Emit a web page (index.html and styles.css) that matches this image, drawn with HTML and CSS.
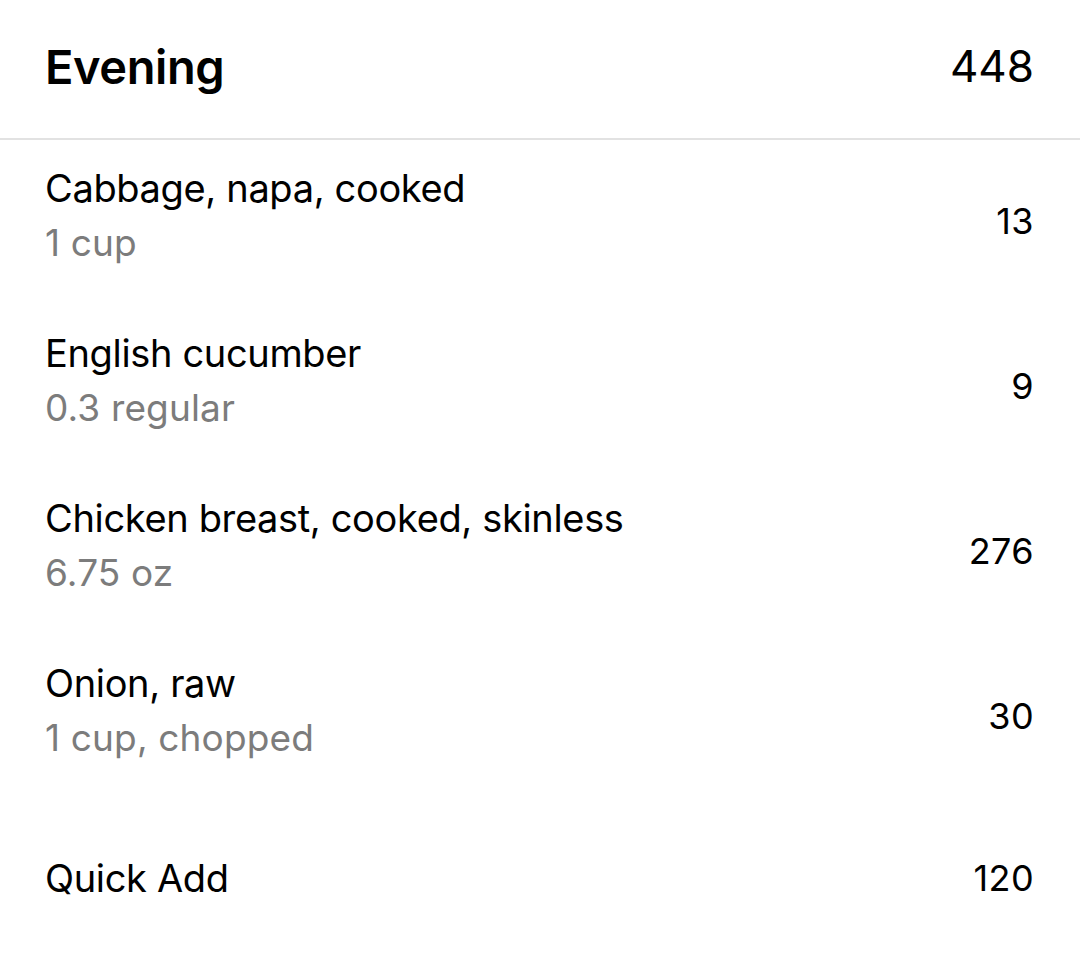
FILE: index.html
```html
<!DOCTYPE html>
<html lang="en">
<head>
<meta charset="utf-8">
<title>Evening</title>
<link rel="stylesheet" href="styles.css">
</head>
<body>
<div class="meal">
  <div class="meal-header">
    <div class="meal-title">Evening</div>
    <div class="meal-total">448</div>
  </div>
  <div class="entry">
    <div class="entry-info">
      <div class="entry-name">Cabbage, napa, cooked</div>
      <div class="entry-amount">1 cup</div>
    </div>
    <div class="entry-cal">13</div>
  </div>
  <div class="entry">
    <div class="entry-info">
      <div class="entry-name">English cucumber</div>
      <div class="entry-amount">0.3 regular</div>
    </div>
    <div class="entry-cal">9</div>
  </div>
  <div class="entry">
    <div class="entry-info">
      <div class="entry-name">Chicken breast, cooked, skinless</div>
      <div class="entry-amount">6.75 oz</div>
    </div>
    <div class="entry-cal">276</div>
  </div>
  <div class="entry">
    <div class="entry-info">
      <div class="entry-name">Onion, raw</div>
      <div class="entry-amount">1 cup, chopped</div>
    </div>
    <div class="entry-cal">30</div>
  </div>
  <div class="entry entry-quick">
    <div class="entry-info">
      <div class="entry-name">Quick Add</div>
    </div>
    <div class="entry-cal">120</div>
  </div>
</div>
</body>
</html>
```

FILE: styles.css
```css
* { box-sizing: border-box; }
html, body {
  margin: 0;
  padding: 0;
  background: #ffffff;
}
body {
  font-family: Inter, "Noto Sans", "Liberation Sans", sans-serif;
  color: #000000;
  width: 1080px;
  height: 958px;
  overflow: hidden;
}
.meal {
  display: flex;
  flex-direction: column;
}
.meal-header {
  height: 140px;
  display: flex;
  align-items: center;
  justify-content: space-between;
  padding: 0 46px 6px 45px;
  border-bottom: 2px solid #e2e2e2;
}
.meal-title {
  font-size: 47px;
  font-weight: 600;
  letter-spacing: -0.4px;
}
.meal-total {
  font-size: 44px;
  font-weight: 400;
}
.entry {
  height: 165px;
  display: flex;
  align-items: center;
  justify-content: space-between;
  padding: 0 46px 0 45px;
}
.entry-quick {
  height: 155px;
}
.entry-info {
  display: flex;
  flex-direction: column;
  gap: 9px;
  margin-bottom: 14px;
}
.entry-quick .entry-info {
  margin-bottom: 0;
}
.entry-name {
  font-size: 38px;
  line-height: 46px;
  letter-spacing: -0.35px;
}
.entry-amount {
  font-size: 37px;
  line-height: 46px;
  color: #7c7c7c;
  letter-spacing: 0.15px;
}
.entry-cal {
  font-size: 36px;
  letter-spacing: 0.4px;
  margin-bottom: 4px;
}
.entry-quick .entry-cal {
  margin-bottom: 0;
}
```
